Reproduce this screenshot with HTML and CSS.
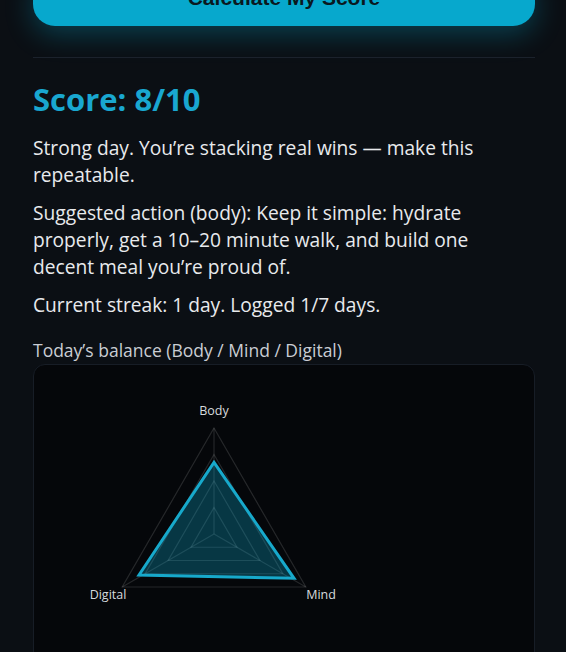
FILE: index.html
```html
<!DOCTYPE html>
<html lang="en">
<head>
<meta charset="utf-8">
<title>Daily Score</title>
<link rel="stylesheet" href="styles.css">
</head>
<body>
<main class="panel">
  <button class="btn" type="button">Calculate My Score</button>
  <hr class="divider">
  <section class="result">
    <h2 class="score">Score: 8/10</h2>
    <p class="msg">Strong day. You’re stacking real wins — make this repeatable.</p>
    <p class="msg">Suggested action (body): Keep it simple: hydrate properly, get a 10–20 minute walk, and build one decent meal you’re proud of.</p>
    <p class="msg">Current streak: 1 day. Logged 1/7 days.</p>
    <div class="chart-label">Today’s balance (Body / Mind / Digital)</div>
    <div class="chart-card">
      <svg class="radar" width="498" height="300" viewBox="0 0 498 300" aria-label="Radar chart">
        <g class="grid">
          <polygon points="180,142.5 202.95,182.25 157.05,182.25"/>
          <polygon points="180,116 225.9,195.5 134.1,195.5"/>
          <polygon points="180,89.5 248.85,208.75 111.15,208.75"/>
          <polygon points="180,63 271.8,222 88.2,222"/>
          <line x1="180" y1="169" x2="180" y2="63"/>
          <line x1="180" y1="169" x2="271.8" y2="222"/>
          <line x1="180" y1="169" x2="88.2" y2="222"/>
        </g>
        <polygon class="data" points="180,97.3 260,213.3 105,210"/>
        <text class="axis-label" x="180" y="47">Body</text>
        <text class="axis-label" x="287" y="231">Mind</text>
        <text class="axis-label" x="74" y="231">Digital</text>
      </svg>
    </div>
  </section>
</main>
</body>
</html>
```

FILE: styles.css
```css
html, body {
  margin: 0;
  padding: 0;
  background: #0b0f14;
}

body {
  font-family: "Open Sans", "Noto Sans", sans-serif;
  color: #e8eaed;
}

.panel {
  margin-top: -30px;
  padding: 0 31px 0 33px;
}

.btn {
  display: block;
  width: 100%;
  padding: 16px;
  border: 0;
  border-radius: 22px;
  background: #07a8cd;
  color: #0a1820;
  font-family: "Liberation Sans", Arial, sans-serif;
  font-weight: 700;
  font-size: 21px;
  line-height: 24px;
  box-shadow: 0 8px 28px rgba(7, 168, 205, 0.32);
}

.divider {
  margin: 31px 0 0;
  border: 0;
  border-top: 1px solid #1b222c;
  height: 0;
}

.score {
  margin: 24px 0 0;
  font-size: 31px;
  line-height: 34px;
  font-weight: 700;
  color: #19a7d0;
}

.msg {
  margin: 11px 0 0;
  padding-right: 12px;
  font-size: 19.2px;
  line-height: 27px;
}

.score + .msg {
  margin-top: 18px;
}

.chart-label {
  margin-top: 20px;
  font-size: 17.5px;
  line-height: 24px;
  color: #c9cdd3;
}

.chart-card {
  margin-top: 2px;
  border: 1px solid #171d26;
  border-radius: 12px;
  background: #05070a;
  overflow: hidden;
}

.radar {
  display: block;
}

.grid polygon,
.grid line {
  fill: none;
  stroke: rgba(255, 255, 255, 0.13);
  stroke-width: 1.2;
}

.data {
  fill: rgba(14, 170, 205, 0.3);
  stroke: #17a9cb;
  stroke-width: 3;
  stroke-linejoin: miter;
}

.axis-label {
  fill: #d6dade;
  font-family: "Open Sans", "Noto Sans", sans-serif;
  font-size: 12.5px;
  text-anchor: middle;
  dominant-baseline: middle;
}
```
